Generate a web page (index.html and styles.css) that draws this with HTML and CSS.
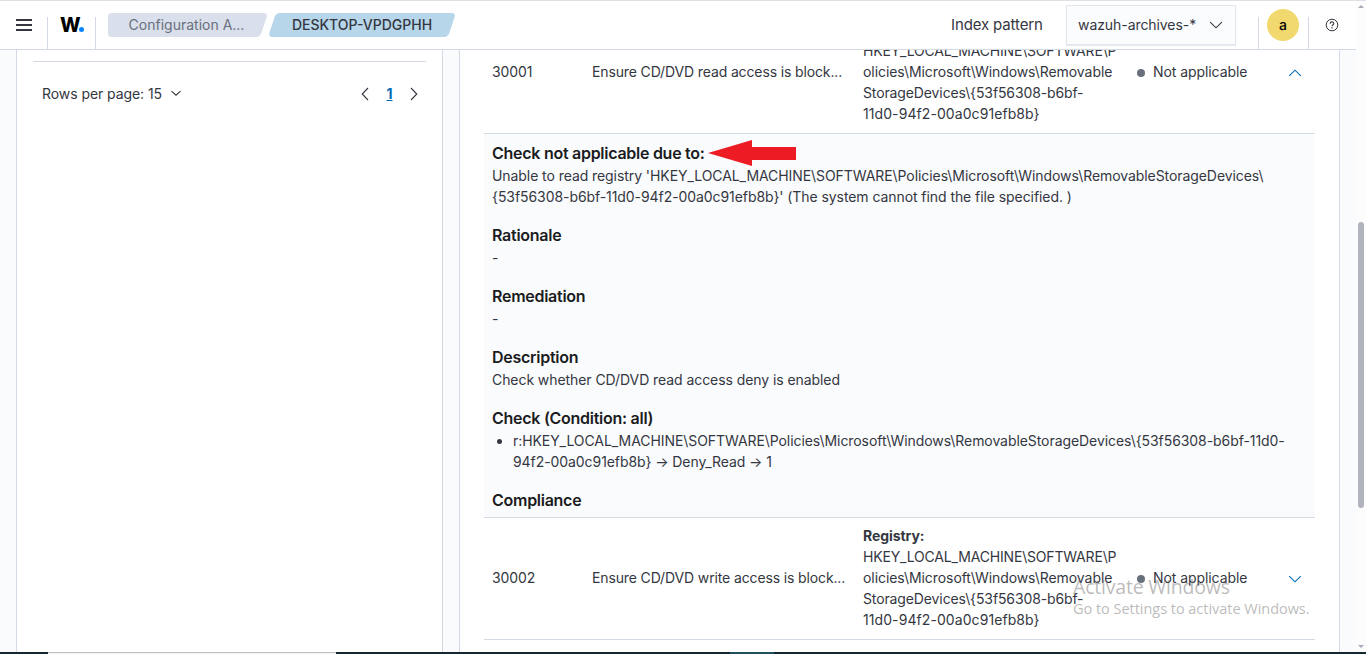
FILE: index.html
```html
<!DOCTYPE html>
<html lang="en">
<head>
<meta charset="utf-8">
<title>Configuration Assessment</title>
<link rel="stylesheet" href="styles.css">
</head>
<body>
<div class="screen">
  <div class="viewport">
    <div class="app">
      <header class="header">
        <div class="menu"><svg width="16" height="12" viewBox="0 0 16 12"><path d="M0 0h16v2H0zM0 5h16v2H0zM0 10h16v2H0z" fill="#343741"/></svg></div>
        <div class="logo"><span class="logo-letter">W</span><span class="logo-dot"></span></div>
        <nav class="crumbs">
          <span class="crumb crumb-first"><span class="crumb-text">Configuration A...</span></span>
          <span class="crumb crumb-last"><span class="crumb-text">DESKTOP-VPDGPHH</span></span>
        </nav>
        <span class="pattern-label"><span>Index pattern</span></span>
        <div class="pattern-select"><span>wazuh-archives-*</span><svg width="14" height="8" viewBox="0 0 14 8"><path d="M1.200 1.200 7 6.800l5.800-5.600" fill="none" stroke="#343741" stroke-width="1.100"/></svg></div>
        <div class="user"><span class="avatar">a</span></div>
        <div class="help"><svg width="14" height="14" viewBox="0 0 14 14" fill="none" stroke="#343741"><circle cx="7" cy="7" r="5.800" stroke-width="1"/><path d="M5.200 5.700c0-2.400 3.600-2.300 3.600-.2 0 1.300-1.800 1.300-1.800 2.700" stroke-width="1.100"/><path d="M7 9.200v1.300" stroke-width="1.200"/></svg></div>
      </header>
      <main class="content">
        <section class="panel panel-left">
          <div class="list-end"></div>
          <div class="pager">
            <span class="rows-label">Rows per page: 15</span>
            <svg class="rows-arrow" width="12" height="7" viewBox="0 0 12 7"><path d="M1.500 1.200 6 5.200l4.500-4" fill="none" stroke="#343741" stroke-width="1.100"/></svg>
            <svg class="prev" width="8" height="14" viewBox="0 0 8 14"><path d="M7 1 1.200 7 7 13" fill="none" stroke="#343741" stroke-width="1.100"/></svg>
            <span class="page">1</span>
            <svg width="8" height="14" viewBox="0 0 8 14"><path d="M1 1l5.800 6L1 13" fill="none" stroke="#343741" stroke-width="1.100"/></svg>
          </div>
        </section>
        <section class="panel panel-right">
          <div class="row row-first">
            <div>30001</div>
            <div class="title">Ensure CD/DVD read access is block...</div>
            <div class="target"><b>Registry:</b><br><span class="key">HKEY_LOCAL_MACHINE\SOFTWARE\P</span><br>olicies\Microsoft\Windows\Removable<br><span class="storage">StorageDevices\{53f56308-b6bf-</span><br><span class="guid">11d0-94f2-00a0c91efb8b}</span></div>
            <div class="status"><i class="dot"></i><span>Not applicable</span></div>
            <div class="toggle"><svg width="14" height="8" viewBox="0 0 14 8"><path d="M1.200 6.800 7 1.200l5.800 5.600" fill="none" stroke="#006bb4" stroke-width="1.100"/></svg></div>
          </div>
          <div class="details">
            <div class="block">
              <h3><span class="h-due">Check not applicable due to:</span><svg class="arrow" width="88" height="26" viewBox="0 0 88 26"><path d="M0 13 44 0v7h44v13H44v6z" fill="#ed1c24"/></svg></h3>
              <p>Unable to read registry 'HKEY_LOCAL_MACHINE\SOFTWARE\Policies\Microsoft\Windows\RemovableStorageDevices\</p>
              <p>{53f56308-b6bf-11d0-94f2-00a0c91efb8b}' (The system cannot find the file specified. )</p>
            </div>
            <div class="block"><h3>Rationale</h3><p>-</p></div>
            <div class="block"><h3>Remediation</h3><p>-</p></div>
            <div class="block"><h3>Description</h3><p>Check whether CD/DVD read access deny is enabled</p></div>
            <div class="block">
              <h3>Check (Condition: all)</h3>
              <ul><li>r:HKEY_LOCAL_MACHINE\SOFTWARE\Policies\Microsoft\Windows\RemovableStorageDevices\{53f56308-b6bf-11d0-<br>94f2-00a0c91efb8b} → Deny_Read → 1</li></ul>
            </div>
            <h3>Compliance</h3>
          </div>
          <div class="row">
            <div>30002</div>
            <div class="title">Ensure CD/DVD write access is block...</div>
            <div class="target"><b>Registry:</b><br><span class="key">HKEY_LOCAL_MACHINE\SOFTWARE\P</span><br>olicies\Microsoft\Windows\Removable<br><span class="storage">StorageDevices\{53f56308-b6bf-</span><br><span class="guid">11d0-94f2-00a0c91efb8b}</span></div>
            <div class="status"><i class="dot"></i><span>Not applicable</span></div>
            <div class="toggle"><svg width="14" height="8" viewBox="0 0 14 8"><path d="M1.200 1.200 7 6.800l5.800-5.600" fill="none" stroke="#006bb4" stroke-width="1.100"/></svg></div>
          </div>
        </section>
      </main>
    </div>
    <div class="scrollbar">
      <i class="scroll-up"></i><i class="thumb"></i><i class="scroll-down"></i>
    </div>
  </div>
  <div class="taskbar"><i class="task-search"></i><i class="task-active"></i></div>
  <div class="watermark"><div class="wm-title">Activate Windows</div><div class="wm-sub">Go to Settings to activate Windows.</div></div>
</div>
</body>
</html>
```
FILE: styles.css
```css
* { box-sizing: border-box; }
body {
  margin: 0;
  font: 14px/21px Inter, "Liberation Sans", sans-serif;
  letter-spacing: -.07px;
  color: #343741;
  background: #fff;
}
h3, p, ul { margin: 0; padding: 0; }
svg { display: block; flex: none; }

.screen { position: relative; height: 654px; display: flex; flex-direction: column; overflow: hidden; }
.viewport { height: 652px; display: flex; border-top: 1px solid #dfdfe5; }
.app { width: 1356px; display: flex; flex-direction: column; }

.header { height: 49px; flex: none; display: flex; border-bottom: 1px solid #d3dae6; background: #fff; }
.menu { width: 48px; height: 48px; padding: 18px 0 0 16px; }
.logo { width: 49px; height: 32px; margin-top: 16px; border: solid #d3dae6; border-width: 0 1px; display: flex; padding-left: 12px; }
.logo-letter { font-size: 19.500px; line-height: 17px; font-weight: 800; color: #000; width: 20px; letter-spacing: -.5px; }
.logo-dot { width: 5px; height: 5px; border-radius: 50%; background: #0a83ff; margin: 10px 0 0 -1px; }
.menu + .logo { margin-left: -1px; }

.crumbs { display: flex; margin: 12px 0 0 12px; height: 24px; }
.crumb { position: relative; display: flex; justify-content: center; line-height: 24px; letter-spacing: 0; }
.crumb-first { width: 160px; margin-right: 0; color: #69707d; padding-right: 3px; }
.crumb-last { width: 188px; color: #343741; font-weight: 500; }
.crumb::before { content: ""; position: absolute; inset: 0 4px; border-radius: 4px; transform: skewX(-18.400deg); }
.crumb-first::after { content: ""; position: absolute; inset: 0 20px 0 0; border-radius: 4px; background: #d9dfeb; }
.crumb-first::before { background: #d9dfeb; left: 20px; }
.crumb-last::before { background: #b7d6ea; }
.crumb-text { position: relative; z-index: 1; white-space: nowrap; }

.pattern-label { margin-left: auto; font-size: 15px; letter-spacing: -.13px; line-height: 24px; padding-top: 12px; width: 115px; white-space: nowrap; }
.pattern-select { width: 170px; height: 40px; margin-top: 4px; border: 1px solid #e0e5ee; background: #fbfcfd; box-shadow: 0 1px 1px #e9ecf2; display: flex; align-items: center; justify-content: space-between; padding: 0 12px 0 11px; }
.pattern-select span { padding-bottom: 2px; }
.user { width: 51px; height: 32px; margin: 16px 0 0 22px; border: solid #d3dae6; border-width: 0 1px; }
.avatar { display: block; width: 32px; height: 32px; margin: -8px 0 0 8px; border-radius: 50%; background: #f1d86f; color: #000; text-align: center; line-height: 32px; font-weight: 500; }
.help { width: 47px; padding: 17px 0 0 16px; }

.content { flex: 1; min-height: 0; overflow: hidden; display: flex; gap: 16px; padding: 0 16px; background: #fafbfd; }
.panel { background: #fff; border: solid #d3dae6; border-width: 0 1px; }
.panel-left { width: 427px; padding: 0 16px; }
.list-end { height: 12px; border-bottom: 1px solid #d3dae6; }
.pager { display: flex; align-items: center; height: 21px; margin-top: 21px; padding: 0 8px 0 9px; }
.rows-label { width: 128px; white-space: nowrap; }
.prev { margin-left: auto; }
.page { width: 41px; text-align: center; color: #006bb4; font-weight: 700; text-decoration: underline; }
.panel-right { width: 881px; padding: 0 24px; }

.row { display: grid; grid-template-columns: 100px 271px 274px 150px 1fr; align-items: center; height: 122px; padding: 7px 0 9px 8px; border-bottom: 1px solid #d3dae6; white-space: nowrap; }
.row-first { margin-top: -38px; }
.title { letter-spacing: -.13px; }
.key { letter-spacing: -.18px; }
.storage { letter-spacing: 0; letter-spacing: -.12px; }
.guid { letter-spacing: .08px; }
.status { display: flex; align-items: center; gap: 8px; }
.dot { width: 8px; height: 8px; margin-top: 2px; border-radius: 50%; background: #69707d; }
.toggle { padding: 2px 0 0 1px; }

.details { height: 384px; padding: 7px 8px 0; background: #fafbfd; border-bottom: 1px solid #d3dae6; white-space: nowrap; }
.details h3 { display: flex; font-size: 16px; line-height: 24px; font-weight: 600; letter-spacing: -.27px; color: #1a1c21; }
.block { margin-bottom: 16px; }
.arrow { margin-left: 4px; margin-top: -1px; height: 26px; margin-bottom: -4px; }
.h-due { width: 212px; }
ul { padding-left: 21px; }

.scrollbar { width: 10px; display: flex; flex-direction: column; align-items: center; background: #fcfcfd; }
.scroll-up { border: 3px solid transparent; border-top: 0; border-bottom: 3px solid #a8abb5; margin-top: 4px; }
.thumb { width: 6px; height: 286px; margin-top: 214px; border-radius: 3px; background: #b1b4be; }
.scroll-down { border: 3px solid transparent; border-bottom: 0; border-top: 3px solid #a8abb5; margin-top: 137px; }

.taskbar { height: 2px; background: #14262e; display: flex; }
.task-search { width: 288px; margin-left: 48px; background: #f3f3f3; border-top: 1px solid #bfbfbf; }
.task-active { width: 44px; margin-left: 394px; background: #1f4f60; }

.watermark { position: absolute; left: 1073px; top: 574px; font-family: "Open Sans", "Noto Sans", sans-serif; color: rgba(120, 120, 120, .5); white-space: nowrap; }
.wm-title { font-size: 19.500px; line-height: 25px; letter-spacing: -.2px; }
.wm-sub { font-size: 14.500px; line-height: 20px; letter-spacing: -.03px; }
```
